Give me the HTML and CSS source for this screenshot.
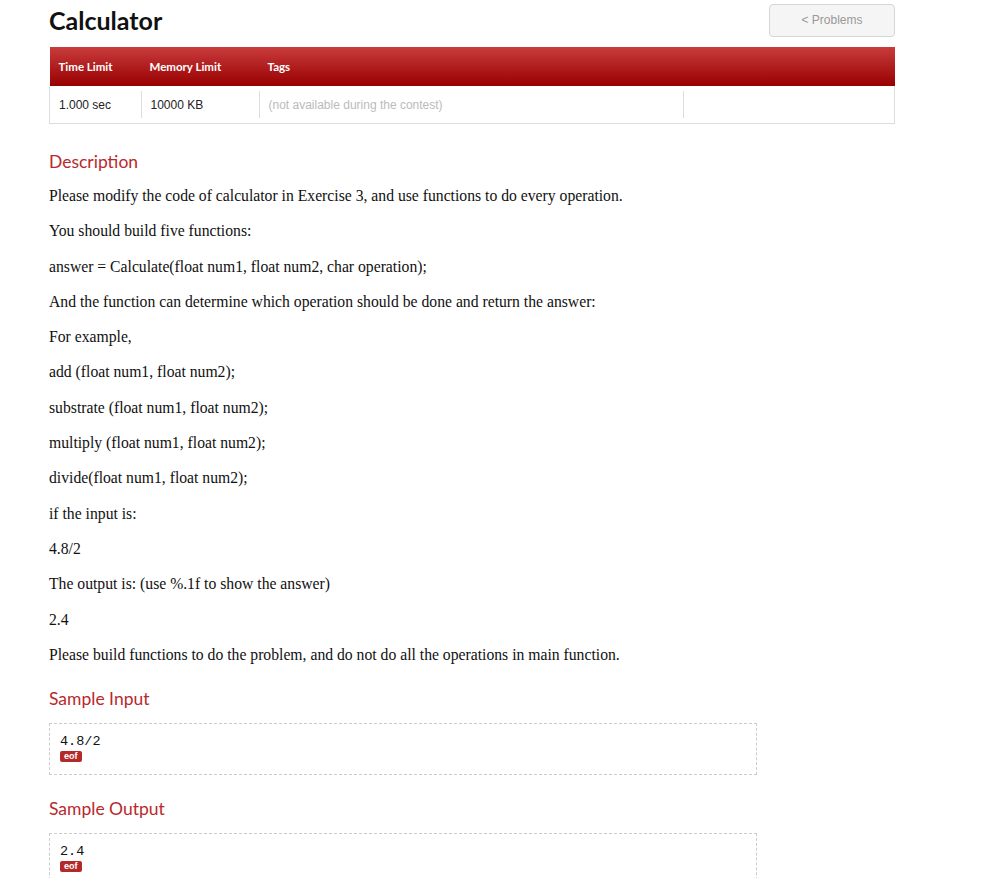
FILE: index.html
```html
<!DOCTYPE html>
<html>
<head>
<meta charset="utf-8">
<link rel="stylesheet" href="styles.css">
</head>
<body>
<div class="page">
  <div class="top">
    <h1 class="title">Calculator</h1>
    <a class="back-btn">&lt; Problems</a>
  </div>
  <table class="limits">
    <thead>
      <tr>
        <th class="c1">Time Limit</th>
        <th class="c2">Memory Limit</th>
        <th class="c3">Tags</th>
        <th class="c4"></th>
      </tr>
    </thead>
    <tbody>
      <tr>
        <td class="c1"><span class="cell">1.000 sec</span></td>
        <td class="c2"><span class="cell sep">10000 KB</span></td>
        <td class="c3"><span class="cell sep muted">(not available during the contest)</span></td>
        <td class="c4"><span class="cell sep"></span></td>
      </tr>
    </tbody>
  </table>

  <h2 class="section">Description</h2>
  <div class="desc">
    <p>Please modify the code of calculator in Exercise 3, and use functions to do every operation.</p>
    <p>You should build five functions:</p>
    <p>answer = Calculate(float num1, float num2, char operation);</p>
    <p>And the function can determine which operation should be done and return the answer:</p>
    <p>For example,</p>
    <p>add (float num1, float num2);</p>
    <p>substrate (float num1, float num2);</p>
    <p>multiply (float num1, float num2);</p>
    <p>divide(float num1, float num2);</p>
    <p>if the input is:</p>
    <p>4.8/2</p>
    <p>The output is: (use %.1f to show the answer)</p>
    <p>2.4</p>
    <p>Please build functions to do the problem, and do not do all the operations in main function.</p>
  </div>

  <h2 class="section sample-h">Sample Input</h2>
  <div class="sample">
    <pre class="code">4.8/2</pre>
    <span class="eof">eof</span>
  </div>

  <h2 class="section sample-h out-h">Sample Output</h2>
  <div class="sample">
    <pre class="code">2.4</pre>
    <span class="eof">eof</span>
  </div>
</div>
</body>
</html>
```

FILE: styles.css
```css
html, body {
  margin: 0;
  padding: 0;
  background: #fff;
}
.page {
  width: 846px;
  padding: 4px 0 0 49px;
  font-family: "Liberation Serif", serif;
  color: #222;
}
.top {
  display: flex;
  justify-content: space-between;
  align-items: flex-start;
  height: 43px;
}
.title {
  margin: 1px 0 0 0;
  font-family: "Lato", "Open Sans", sans-serif;
  font-weight: 700;
  font-size: 25px;
  line-height: 30px;
  color: #111;
}
.back-btn {
  display: block;
  box-sizing: border-box;
  width: 126px;
  height: 33px;
  line-height: 31px;
  text-align: center;
  background: #f5f5f5;
  border: 1px solid #d6d6d6;
  border-radius: 4px;
  font-family: "Liberation Sans", Arial, sans-serif;
  font-size: 12px;
  color: #999;
}
.limits {
  width: 846px;
  border-collapse: collapse;
  font-family: "Liberation Sans", Arial, sans-serif;
  font-size: 12px;
}
.limits thead tr {
  background: linear-gradient(#c93c3c, #980000);
}
.limits th {
  height: 39px;
  padding: 0 0 0 9px;
  text-align: left;
  font-family: "Lato", "Open Sans", sans-serif;
  font-weight: 700;
  font-size: 11.5px;
  color: #fff;
  vertical-align: middle;
}
.limits th.c1 { width: 82px; }
.limits th.c2 { width: 109px; }
.limits th.c3 { width: 415px; }
.limits tbody td {
  height: 37px;
  padding: 0;
  border-bottom: 1px solid #ddd;
  vertical-align: middle;
}
.limits tbody td.c1 { border-left: 1px solid #ddd; }
.limits tbody td.c4 { border-right: 1px solid #ddd; }
.cell {
  display: flex;
  align-items: center;
  height: 27px;
  padding-left: 9px;
  color: #222;
}
.muted { color: #bbb; }
.cell.sep { border-left: 1px solid #ddd; }

.section {
  margin: 26px 0 0 0;
  font-family: "Lato", "Open Sans", sans-serif;
  font-weight: 400;
  font-size: 17.5px;
  line-height: 24px;
  color: #b8292b;
}
.desc {
  margin-top: 4px;
}
.desc p {
  margin: 0;
  font-size: 15.7px;
  line-height: 35.3px;
  color: #111;
}
.sample-h {
  margin-top: 15px;
}
.sample-h.out-h {
  margin-top: 22px;
}
.sample {
  width: 708px;
  box-sizing: border-box;
  margin-top: 12px;
  padding: 8px 10px 5px 10px;
  border: 1px dashed #ccc;
}
.code {
  margin: 0;
  font-family: "Liberation Mono", "Courier New", monospace;
  font-size: 13.5px;
  line-height: 19px;
  color: #111;
}
.eof {
  display: inline-block;
  margin-top: 0;
  padding: 0 4px;
  height: 11px;
  line-height: 11px;
  border-radius: 2px;
  background: #b42a2a;
  color: #fff;
  font-family: "Liberation Sans", Arial, sans-serif;
  font-weight: 700;
  font-size: 9px;
  vertical-align: top;
}
```
